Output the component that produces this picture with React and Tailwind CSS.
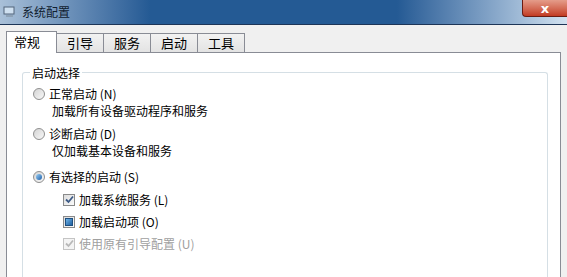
import React from "react";

const cjk = { fontFamily: '"Noto Sans CJK SC", "Liberation Sans", sans-serif' };

function Radio({ checked }) {
  return (
    <span className="relative inline-flex w-[12px] h-[12px] shrink-0 items-center justify-center rounded-full border border-[#8f8f8f] bg-gradient-to-br from-[#d4d4d4] to-[#f8f8f8]">
      {checked && (
        <span className="w-[6px] h-[6px] rounded-full bg-gradient-to-br from-[#9ad0f5] to-[#1b5fa8]" />
      )}
    </span>
  );
}

function Check({ state, disabled }) {
  return (
    <span
      className={`inline-flex w-[12px] h-[12px] shrink-0 items-center justify-center border ${
        disabled ? "border-[#c4c4c4] bg-[#f4f4f4]" : "border-[#8a8a8a] bg-gradient-to-br from-[#dcdcdc] to-[#fbfbfb]"
      }`}
    >
      {state === "checked" && (
        <svg width="9" height="9" viewBox="0 0 9 9">
          <path
            d="M1 4.5 L3.5 7 L8 1.5"
            fill="none"
            stroke={disabled ? "#b8b8b8" : "#3c5a86"}
            strokeWidth="1.8"
          />
        </svg>
      )}
      {state === "mixed" && (
        <span className="w-[8px] h-[8px] bg-gradient-to-br from-[#6fb4e8] to-[#1d5f9f] border border-[#1e4f80]" />
      )}
    </span>
  );
}

export default function App() {
  const tabs = ["常规", "引导", "服务", "启动", "工具"];
  return (
    <div className="w-[567px] h-[277px] overflow-hidden flex flex-col bg-[#f0f0f0]" style={cjk}>
      {/* 标题栏 */}
      <div className="relative h-[25px] shrink-0 flex items-center border-b border-[#1d3557] bg-[#245a94]">
        <div className="flex items-center h-full w-[150px] bg-gradient-to-r from-[#a9c0d8] to-[#245a94]">
          <svg className="ml-[3px]" width="13" height="12" viewBox="0 0 13 12">
            <rect x="1" y="1" width="10" height="7" fill="#cfe0f0" stroke="#52657a" />
            <rect x="3" y="9" width="7" height="2" fill="#8ea2b6" />
          </svg>
          <span className="ml-[6px] text-[12px] text-[#10202f]">系统配置</span>
        </div>
        <div className="h-full flex-1" />
        <div className="h-full w-[170px] bg-gradient-to-r from-[#245a94] to-[#d2e2f0]" />
        <div className="absolute right-0 top-0 w-[45px] h-[17px] flex items-center justify-center rounded-bl-[4px] border border-t-0 border-r-0 border-[#6b1c12] bg-gradient-to-b from-[#e49c8a] to-[#c23a22]">
          <span className="text-white text-[13px] font-bold leading-none" style={{ fontFamily: '"DejaVu Sans", sans-serif' }}>
            x
          </span>
        </div>
      </div>

      <div className="flex-1 flex flex-col pt-[6px] pl-[6px] pr-[6px]">
        {/* 标签 */}
        <div className="flex items-end h-[21px] relative z-10">
          {tabs.map((t, i) =>
            i === 0 ? (
              <div key={t} className="w-[51px] h-[22px] -mb-px bg-white border border-b-0 border-[#898c95] text-[13px] leading-[20px] pl-[7px] text-black">
                {t}
              </div>
            ) : (
              <div
                key={t}
                className="w-[47px] h-[19px] border border-l-0 border-b-0 border-[#898c95] bg-gradient-to-b from-[#f2f2f2] to-[#e3e3e3] text-[13px] leading-[18px] pl-[10px] text-black"
              >
                {t}
              </div>
            )
          )}
        </div>

        {/* 面板 */}
        <div className="flex-1 bg-white border border-b-0 border-[#898c95] pl-[15px] pr-[12px] pt-[11px]">
          <fieldset className="h-full border border-b-0 border-[#d5dfe5] rounded-t-[3px] pl-[10px]">
            <legend className="ml-[-3px] px-[2px] text-[12px] leading-[17px] text-black">启动选择</legend>

            <div className="pt-[4px] text-[12px] leading-[17px] text-black">
              <div className="flex items-center gap-[4px]">
                <Radio />
                <span>正常启动 (N)</span>
              </div>
              <div className="pl-[19px]">加载所有设备驱动程序和服务</div>

              <div className="flex items-center gap-[4px] mt-[6px]">
                <Radio />
                <span>诊断启动 (D)</span>
              </div>
              <div className="pl-[19px]">仅加载基本设备和服务</div>

              <div className="flex items-center gap-[4px] mt-[9px]">
                <Radio checked />
                <span>有选择的启动 (S)</span>
              </div>

              <div className="pl-[30px] flex flex-col gap-[5px] mt-[6px]">
                <div className="flex items-center gap-[4px]">
                  <Check state="checked" />
                  <span>加载系统服务 (L)</span>
                </div>
                <div className="flex items-center gap-[4px]">
                  <Check state="mixed" />
                  <span>加载启动项 (O)</span>
                </div>
                <div className="flex items-center gap-[4px] text-[#a0a0a0]">
                  <Check state="checked" disabled />
                  <span>使用原有引导配置 (U)</span>
                </div>
              </div>
            </div>
          </fieldset>
        </div>
      </div>
    </div>
  );
}
